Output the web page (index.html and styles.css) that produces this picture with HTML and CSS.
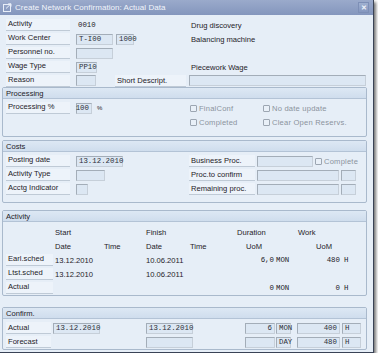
FILE: index.html
```html
<!DOCTYPE html>
<html>
<head>
<meta charset="utf-8">
<link rel="stylesheet" href="styles.css">
</head>
<body>
<div class="dialog">
  <div class="titlebar">
    <svg class="ticon" width="9" height="9" viewBox="0 0 9 9"><rect x="0.5" y="1.5" width="7" height="7" fill="none" stroke="#e8eef8" stroke-width="1"/><path d="M3 5.5 L8 0.8 M5.2 0.8 H8 V3.6" fill="none" stroke="#e8eef8" stroke-width="1"/></svg>
    <span class="ttext">Create Network Confirmation: Actual Data</span>
    <span class="close">&#x2715;</span>
  </div>

  <div class="top">
    <div class="row">
      <span class="lbl w64">Activity</span>
      <div class="mid"><span class="mono pl2">0010</span></div>
      <div class="right"><span class="txt pl2">Drug discovery</span></div>
    </div>
    <div class="row">
      <span class="lbl w64">Work Center</span>
      <div class="mid"><span class="fld mono w37">T-I00</span><span class="fld mono w18 ml3">1000</span></div>
      <div class="right"><span class="txt pl2">Balancing machine</span></div>
    </div>
    <div class="row">
      <span class="lbl w64">Personnel no.</span>
      <div class="mid"><span class="fld w37"></span></div>
    </div>
    <div class="row">
      <span class="lbl w64">Wage Type</span>
      <div class="mid"><span class="fld mono w21">PP10</span></div>
      <div class="right"><span class="txt pl2">Piecework Wage</span></div>
    </div>
    <div class="row">
      <span class="lbl w64">Reason</span>
      <div class="mid"><span class="fld w20"></span><span class="lbl w71 ml19">Short Descript.</span></div>
      <div class="right"><span class="fld w177"></span></div>
    </div>
  </div>

  <div class="group g-proc">
    <div class="ghead">Processing</div>
    <div class="gbody">
      <div class="row">
        <span class="lbl w64">Processing %</span>
        <div class="mid"><span class="fld mono w16 ar">100</span><span class="pct">%</span></div>
        <div class="right chk"><span class="cb"></span><span class="cbt w66">FinalConf</span><span class="cb"></span><span class="cbt">No date update</span></div>
      </div>
      <div class="row">
        <span class="w64"></span>
        <div class="mid"></div>
        <div class="right chk"><span class="cb"></span><span class="cbt w66">Completed</span><span class="cb"></span><span class="cbt">Clear Open Reservs.</span></div>
      </div>
    </div>
  </div>

  <div class="group g-costs">
    <div class="ghead">Costs</div>
    <div class="gbody">
      <div class="row">
        <span class="lbl w64">Posting date</span>
        <div class="mid"><span class="fld mono w47">13.12.2010</span></div>
        <div class="right"><span class="lbl w66">Business Proc.</span><span class="fld w56 ml2"></span><span class="cb ml2"></span><span class="cbt">Complete</span></div>
      </div>
      <div class="row">
        <span class="lbl w64">Activity Type</span>
        <div class="mid"><span class="fld w29"></span></div>
        <div class="right"><span class="lbl w66">Proc.to confirm</span><span class="fld w82 ml2"></span><span class="fld w15 ml2"></span></div>
      </div>
      <div class="row">
        <span class="lbl w64">Acctg Indicator</span>
        <div class="mid"><span class="fld w12"></span></div>
        <div class="right"><span class="lbl w66">Remaining proc.</span><span class="fld w82 ml2"></span><span class="fld w15 ml2"></span></div>
      </div>
    </div>
  </div>

  <div class="group g-act">
    <div class="ghead">Activity</div>
    <div class="gbody act">
      <div class="arow">
        <span class="a1"></span><span class="a2">Start</span><span class="a3"></span><span class="a4">Finish</span><span class="a5"></span>
        <span class="a6 hd1">Duration</span><span class="a7"></span><span class="a8 hw1">Work</span>
      </div>
      <div class="arow">
        <span class="a1"></span><span class="a2">Date</span><span class="a3">Time</span><span class="a4">Date</span><span class="a5">Time</span>
        <span class="a6 hd2">UoM</span><span class="a7"></span><span class="a8 hw2">UoM</span>
      </div>
      <div class="arow">
        <span class="a1"><span class="lbl w47">Earl.sched</span></span><span class="a2">13.12.2010</span><span class="a3"></span><span class="a4">10.06.2011</span><span class="a5"></span>
        <span class="a6 num mono">6,0</span><span class="a7 mono">MON</span><span class="a8 num mono">480</span><span class="a9 mono">H</span>
      </div>
      <div class="arow">
        <span class="a1"><span class="lbl w47">Ltst.sched</span></span><span class="a2">13.12.2010</span><span class="a3"></span><span class="a4">10.06.2011</span><span class="a5"></span>
      </div>
      <div class="arow">
        <span class="a1"><span class="lbl w47">Actual</span></span><span class="a2"></span><span class="a3"></span><span class="a4"></span><span class="a5"></span>
        <span class="a6 num mono">0</span><span class="a7 mono">MON</span><span class="a8 num mono">0</span><span class="a9 mono">H</span>
      </div>
    </div>
  </div>

  <div class="group g-conf">
    <div class="ghead">Confirm.</div>
    <div class="gbody">
      <div class="row">
        <span class="lbl w45">Actual</span>
        <span class="fld mono w47 ml2">13.12.2010</span>
        <span class="fld mono w47 ml46">13.12.2010</span>
        <span class="fld mono w30 ar ml52">6</span>
        <span class="fld mono w15 ml1">MON</span>
        <span class="fld mono w43 ar ml6">400</span>
        <span class="fld mono w19 ml2">H</span>
      </div>
      <div class="row">
        <span class="lbl w45">Forecast</span>
        <span class="w47 ml2"></span>
        <span class="fld mono w47 ml46"></span>
        <span class="fld mono w30 ar ml52"></span>
        <span class="fld mono w15 ml1">DAY</span>
        <span class="fld mono w43 ar ml6">480</span>
        <span class="fld mono w19 ml2">H</span>
      </div>
    </div>
  </div>
</div>
</body>
</html>
```

FILE: styles.css
```css
* { box-sizing: border-box; }
html, body { margin: 0; padding: 0; background: #ffffff; }
body {
  font-family: "Liberation Sans", Arial, sans-serif;
  font-size: 7.6px;
  color: #1e2228;
}
.dialog {
  width: 374px;
  height: 353px;
  background: #e6eef7;
  border-right: 1px solid #3a4356;
  border-bottom: 1px solid #3a4356;
  box-shadow: 2px 2px 3px rgba(0,0,0,0.55);
  overflow: hidden;
}
.titlebar {
  height: 15px;
  background: linear-gradient(#9aaacb, #8496bd);
  display: flex;
  align-items: center;
  padding-left: 3px;
  color: #f2f5fb;
  font-size: 8px;
}
.ticon { flex: none; }
.ttext { margin-left: 3px; flex: 1; letter-spacing: 0.05px; }
.close {
  width: 11px; height: 11px;
  margin-right: 4px;
  background: linear-gradient(#9fb0d0, #8597bf);
  border: 1px solid #7d8fb6;
  color: #eef2fa;
  font-size: 7px;
  display: flex; align-items: center; justify-content: center;
  font-weight: bold;
}
.top { padding: 3px 0 0 6px; height: 72px; }
.row { display: flex; align-items: center; height: 14px; }
.top .row:last-child { height: 13px; }
.mid { width: 113px; margin-left: 6px; display: flex; align-items: center; flex: none; }
.right { display: flex; align-items: center; flex: none; }
.txt { white-space: nowrap; }
.pl2 { padding-left: 2px; }

.lbl {
  display: flex; align-items: center;
  height: 12px;
  padding-left: 2px;
  background: #edf3fa;
  border-bottom: 1px solid #bfcad6;
  white-space: nowrap;
  flex: none;
}
.fld {
  display: flex; align-items: center;
  height: 11px;
  padding: 0 2px;
  background: #dce7f3;
  border: 1px solid #a3adb8;
  border-right-color: #c6cfd9;
  border-bottom-color: #c6cfd9;
  flex: none;
  white-space: nowrap;
  color: #2c3038;
}
.mono { font-family: "Liberation Mono", "Courier New", monospace; font-size: 7.4px; }
.ar { justify-content: flex-end; }
.pct { margin-left: 5px; font-size: 6px; }

.w12 { width: 12px; } .w15 { width: 15px; } .w16 { width: 16px; } .w18 { width: 18px; }
.w19 { width: 19px; } .w20 { width: 20px; } .w21 { width: 21px; } .w29 { width: 29px; }
.w30 { width: 30px; } .w37 { width: 37px; } .w43 { width: 43px; } .w45 { width: 45px; }
.w47 { width: 47px; } .w56 { width: 56px; } .w64 { width: 64px; } .w66 { width: 66px; }
.w71 { width: 71px; } .w82 { width: 82px; } .w177 { width: 177px; }
.ml1 { margin-left: 1px; } .ml2 { margin-left: 2px; } .ml3 { margin-left: 3px; }
.ml6 { margin-left: 6px; } .ml19 { margin-left: 19px; } .ml46 { margin-left: 46px; } .ml52 { margin-left: 52px; }
span.w64, span.w47 { flex: none; display: inline-block; }

.group {
  margin-left: 2px;
  width: 365px;
  border: 1px solid #a9b9cc;
  border-radius: 2px;
  background: #e6eef7;
}
.ghead {
  height: 11px;
  display: flex; align-items: center;
  padding-left: 3px;
  background: linear-gradient(#dde8f4, #cfdded);
  border-bottom: 1px solid #b3c3d6;
  color: #1e2228;
}
.gbody { padding: 2px 0 0 3px; }
.g-proc { height: 50px; }
.g-costs { height: 63px; margin-top: 3px; }
.g-act { height: 86px; margin-top: 7px; }
.g-conf { height: 43px; margin-top: 11px; }

.cb {
  width: 7px; height: 7px;
  border: 1px solid #9ca6b2;
  background: #e9f0f8;
  border-radius: 1px;
  flex: none;
  display: inline-block;
}
.cbt { margin-left: 2px; color: #8b939d; white-space: nowrap; flex: none; letter-spacing: 0.2px; }
.chk .cbt.w66 { width: 64px; }
.right.chk { margin-left: 1px; }
.right .lbl.w66 { width: 66px; }

.act { padding-top: 3px; }
.arow { display: flex; align-items: center; height: 14px; }
.arow > span { flex: none; white-space: nowrap; display: flex; align-items: center; }
.a1 { width: 49px; }
.a2 { width: 49px; }
.a3 { width: 42px; }
.a4 { width: 44px; }
.a5 { width: 40px; }
.a6 { width: 44px; }
.a7 { width: 20px; padding-left: 2px; }
.a8 { width: 46px; }
.a9 { width: 20px; padding-left: 4px; }
.num { justify-content: flex-end; }
.hd1 { padding-left: 7px; }
.hd2 { padding-left: 16px; }
.hw1 { padding-left: 4px; }
.hw2 { padding-left: 22px; }
```
